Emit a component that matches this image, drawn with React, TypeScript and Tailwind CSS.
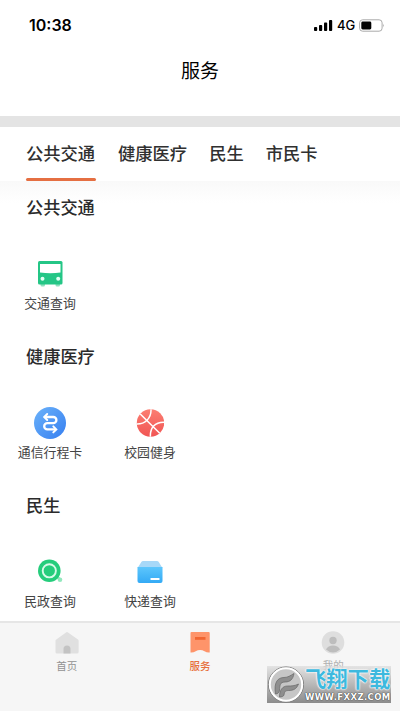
/**
 * App.tsx
 *
 * City services screen: status bar, page title, category tabs,
 * service sections and the bottom tab bar.
 */

import React from 'react';

type Service = { label: string; icon: React.ReactNode };
type Section = { title: string; services: Service[] };

const BusIcon: React.FC = () => (
  <svg width="26" height="28" viewBox="0 0 26 28">
    <rect x="3.5" y="22" width="4.5" height="4.5" rx="1.5" fill="#8fe0be" />
    <rect x="18.5" y="22" width="4.5" height="4.5" rx="1.5" fill="#8fe0be" />
    <rect x="1" y="1" width="24.5" height="23.5" rx="1.5" fill="#24c686" />
    <path d="M3 4h20.5v8.5q-10 1.5-20.500 0z" fill="#fff" />
    <circle cx="5.5" cy="18.7" r="2" fill="#e2fff3" />
    <circle cx="21.2" cy="18.7" r="2" fill="#e2fff3" />
  </svg>
);

const TravelIcon: React.FC = () => (
  <svg width="32" height="32" viewBox="0 0 32 32">
    <defs>
      <linearGradient id="travel" x1="0" y1="0" x2="1" y2="1">
        <stop offset="0" stopColor="#6bb2fa" />
        <stop offset="1" stopColor="#367ff0" />
      </linearGradient>
    </defs>
    <circle cx="16" cy="16" r="16" fill="url(#travel)" />
    <path
      d="M11 10h8.300a3.100 3.100 0 0 1 0 6.200h-6a3.100 3.100 0 0 0 0 6.200h8.700"
      fill="none"
      stroke="#fff"
      strokeWidth="2.3"
    />
    <path
      d="M13.200 7L10.200 10l3 3M19.300 19.400l3 3-3 3"
      fill="none"
      stroke="#fff"
      strokeWidth="2"
      strokeLinecap="round"
    />
  </svg>
);

const BallIcon: React.FC = () => (
  <svg width="28" height="28" viewBox="0 0 28 28">
    <defs>
      <linearGradient id="ball" x1="0" y1="0" x2="0" y2="1">
        <stop offset="0" stopColor="#fb7e72" />
        <stop offset="1" stopColor="#f15554" />
      </linearGradient>
      <clipPath id="ballClip">
        <circle cx="14.5" cy="14" r="13.7" />
      </clipPath>
    </defs>
    <circle cx="14.5" cy="14" r="13.7" fill="url(#ball)" />
    <g clipPath="url(#ballClip)" fill="none" stroke="#fff" strokeWidth="1.5">
      <path d="M3.500 4.300L24.500 25M0 15C9 15.500 15.500 9.500 15 0M29 13.200C19 12.500 13.500 19 14.500 29" />
    </g>
  </svg>
);

const SearchIcon: React.FC = () => (
  <svg width="26" height="26" viewBox="0 0 26 26">
    <circle cx="23" cy="20.8" r="2.3" fill="#93e8bd" />
    <path d="M18.500 16.500l4.500 4" stroke="#93e8bd" strokeWidth="3" />
    <circle cx="12.3" cy="11.8" r="11.3" fill="#25cd7c" />
    <circle cx="12.3" cy="11.8" r="6.6" fill="none" stroke="#d8fbe9" strokeWidth="1.9" />
  </svg>
);

const BoxIcon: React.FC = () => (
  <svg width="26" height="24" viewBox="0 0 26 24">
    <defs>
      <linearGradient id="box" x1="0" y1="0" x2="0" y2="1">
        <stop offset="0" stopColor="#5dc6fc" />
        <stop offset="1" stopColor="#34aaf5" />
      </linearGradient>
    </defs>
    <path d="M6 1h14q1 0 1.600.8L25.500 8h-25L4.500 1.800Q5 1 6 1z" fill="#a7d8f8" />
    <path d="M.5 7h25v14q0 2-2 2h-21q-2 0-2-2z" fill="url(#box)" />
    <rect x="13.5" y="18" width="9" height="2" rx=".6" fill="#fff" />
  </svg>
);

const SECTIONS: Section[] = [
  { title: '公共交通', services: [{ label: '交通查询', icon: <BusIcon /> }] },
  {
    title: '健康医疗',
    services: [
      { label: '通信行程卡', icon: <TravelIcon /> },
      { label: '校园健身', icon: <BallIcon /> },
    ],
  },
  {
    title: '民生',
    services: [
      { label: '民政查询', icon: <SearchIcon /> },
      { label: '快递查询', icon: <BoxIcon /> },
    ],
  },
];

const TABS = ['公共交通', '健康医疗', '民生', '市民卡'];

const StatusBar: React.FC = () => (
  <div className="flex h-[50px] shrink-0 items-center justify-between pl-[29px] pr-[15px] font-['Inter','Liberation_Sans',sans-serif]">
    <span className="text-[16px] font-semibold leading-5">10:38</span>
    <div className="flex items-center">
      <svg width="19" height="13" viewBox="0 0 19 13" fill="#000">
        <rect x="0" y="8" width="3.2" height="4" rx=".9" />
        <rect x="5" y="6" width="3.2" height="6" rx=".9" />
        <rect x="10" y="3.5" width="3.2" height="8.5" rx=".9" />
        <rect x="15" y="1" width="3.2" height="11" rx=".9" />
      </svg>
      <span className="ml-[4px] w-[18px] text-[13px] font-medium leading-5">4G</span>
      <svg className="ml-[4px]" width="26" height="13" viewBox="0 0 26 13">
        <rect x=".6" y=".8" width="22.5" height="11.4" rx="3" fill="none" stroke="#aaa" />
        <rect x="2.3" y="2.5" width="10" height="8" rx="1.4" fill="#000" />
        <path d="M24.300 4.700q1.400 1.800 0 3.600z" fill="#999" />
      </svg>
    </div>
  </div>
);

const CategoryTabs: React.FC = () => (
  <div className="flex h-[54px] shrink-0 gap-[22px] bg-white pl-[26px]">
    {TABS.map((tab, i) => (
      <div key={tab} className="flex flex-col justify-between">
        <span className="pt-[14px] text-[17.3px] font-medium leading-6 text-[#303030]">{tab}</span>
        {i === 0 && <div className="h-[3px] w-[70px] rounded-sm bg-[#e56f42]" />}
      </div>
    ))}
  </div>
);

const ServiceSection: React.FC<{ section: Section }> = ({ section }) => (
  <section className="h-[149px] shrink-0">
    <h2 className="pl-[26px] pt-[14px] text-[17.2px] font-medium leading-6 text-[#2b2b2b]">
      {section.title}
    </h2>
    <div className="flex pt-[39px]">
      {section.services.map((service) => (
        <div key={service.label} className="flex w-[100px] flex-col items-center">
          <div className="flex h-8 items-center">{service.icon}</div>
          <span className="mt-[3px] whitespace-nowrap text-[12.9px] leading-5 text-[#444]">
            {service.label}
          </span>
        </div>
      ))}
    </div>
  </section>
);

const Watermark: React.FC = () => (
  <div className="absolute left-[267px] top-[43px] flex h-[37px] w-[124px] items-center bg-linear-to-b from-[#dcdcdc]/70 to-[#8c8c8c]">
    <svg className="shrink-0" width="38" height="37" viewBox="0 0 38 37">
      <circle cx="19" cy="18.5" r="17.5" fill="#c6c6c6" stroke="#777" />
      <circle cx="19" cy="18.5" r="16.2" fill="none" stroke="#fff" strokeWidth="2" />
      <path
        d="M8.500 28C6.500 16 11 11.500 17 11.500c4 0 6.500-2 10-4-1 6-4 8.500-9 8.500-5.500 0-5 4-5.500 8 0 2-1.500 4-4 4z"
        fill="#8e8e8e"
        stroke="#666"
        strokeWidth=".7"
      />
      <path
        d="M12.500 31c0-7 3-11 8-11 4 0 7 0 11-2-2 5-5 6.500-10 6.500-4 0-4 2-4.500 4.500-.5 1.500-2.500 2-4.500 2z"
        fill="#8e8e8e"
        stroke="#666"
        strokeWidth=".7"
      />
    </svg>
    <div className="flex flex-col">
      <span className="whitespace-nowrap text-[21.3px] font-bold leading-[20px] text-[#3db9de] [text-shadow:0_0_1px_#fff,0_0_2px_#fff,0_0_2px_#fff]">
        飞翔下载
      </span>
      <span className="mt-[4px] whitespace-nowrap font-['DejaVu_Sans',sans-serif] text-[8.5px] font-bold leading-[10px] tracking-[0.4px] text-white [text-shadow:0_0_1px_#333,0_0_1px_#333]">
        WWW.FXXZ.COM
      </span>
    </div>
  </div>
);

const BottomNav: React.FC = () => (
  <nav className="relative mt-auto flex h-[90px] shrink-0 border-t-2 border-[#e6e6e6] bg-[#f6f6f6] text-[10.5px] leading-4 text-[#929292]">
    <div className="flex flex-1 flex-col items-center pt-[8px]">
      <svg width="24" height="24" viewBox="0 0 24 24">
        <path d="M11 1.400q1-.8 2 0l10 7q.6.600.6 1.200V21q0 1.500-1.500 1.500h-20Q.5 22.500.5 21V9.600q0-.6.800-1.200z" fill="#e0e0e0" />
        <path d="M8.500 22.500V18a3.500 3.500 0 0 1 7 0v4.500z" fill="#c3c3c3" />
      </svg>
      <span className="mt-[3px]">首页</span>
    </div>
    <div className="flex flex-1 flex-col items-center pt-[8px] text-[#e6703c]">
      <svg width="24" height="24" viewBox="0 0 24 24">
        <path d="M3.500 1h17.200q1 0 1 1v19.500q-3 .2-5.200-1.200-2-1.400-4.400-1.400t-4.400 1.400q-2.200 1.400-5.200 1.200V2q0-1 1-1z" fill="#fe946a" />
        <rect x="7" y="6" width="10.5" height="2.8" fill="#f16531" />
      </svg>
      <span className="mt-[3px] font-medium">服务</span>
    </div>
    <div className="flex flex-1 flex-col items-center pt-[8px]">
      <svg width="24" height="24" viewBox="0 0 24 24">
        <circle cx="12" cy="11.5" r="11.3" fill="#dedede" />
        <circle cx="12" cy="9.5" r="3.7" fill="#bdbdbd" />
        <path d="M5 18.500q2-4 7-4t7 4q-7 6-14 0z" fill="#bdbdbd" />
      </svg>
      <span className="mt-[2px] text-[#b0b0b0]">我的</span>
    </div>
    <Watermark />
  </nav>
);

const App: React.FC = () => {
  return (
    <div className="flex h-[711px] w-[400px] flex-col overflow-hidden bg-white font-['Noto_Sans_CJK_SC',sans-serif] text-black">
      <StatusBar />
      <header className="h-[66px] shrink-0 pt-[6px] text-center text-[19px] leading-7">服务</header>
      <div className="h-[11px] shrink-0 bg-[#e4e4e4]" />
      <CategoryTabs />
      <main className="flex min-h-0 flex-1 flex-col overflow-hidden bg-linear-to-b from-[#f9f9f9] to-white to-5%">
        {SECTIONS.map((section) => (
          <ServiceSection key={section.title} section={section} />
        ))}
      </main>
      <BottomNav />
    </div>
  );
};

export default App;
